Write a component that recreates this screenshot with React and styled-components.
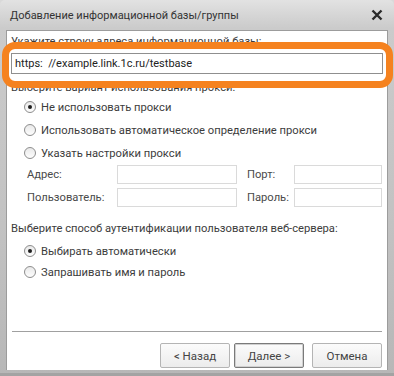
import React, { useState } from "react";
import styled, { createGlobalStyle } from "styled-components";

const GlobalStyle = createGlobalStyle`
  body {
    margin: 0;
    background: #d9d9d9;
    font-family: Roboto, "Liberation Sans", Arial, sans-serif;
  }
`;

const Window = styled.div`
  position: relative;
  width: 394px;
  height: 376px;
  box-sizing: border-box;
  padding: 0 6px 6px 6px;
  display: flex;
  flex-direction: column;
  background: linear-gradient(#e2e2e2, #cbcbcb 28px, #c2c2c2 60%, #b7b7b7);
  border-radius: 5px 5px 0 0;
  box-shadow: inset 0 -3px 0 #a3a3a3;
`;

const TitleBar = styled.div`
  height: 30px;
  display: flex;
  align-items: center;
  justify-content: space-between;
  padding: 0 4px 0 4px;
  font-size: 11px;
  color: #333;
`;

const Close = styled.button`
  border: none;
  background: none;
  padding: 0;
  width: 14px;
  height: 14px;
  display: flex;
  align-items: center;
  justify-content: center;
`;

const Content = styled.div`
  flex: 1;
  background: #fff;
  border: 1px solid #9c9c9c;
  border-bottom: none;
  padding: 3px 4px 2px 4px;
  display: flex;
  flex-direction: column;
  font-size: 11.2px;
  color: #3c3c3c;
`;

const Caption = styled.div`
  height: 16px;
  line-height: 16px;
  margin-top: ${(p) => p.$top || 0}px;
  white-space: nowrap;
`;

const UrlInput = styled.input`
  margin-top: 3px;
  height: 21px;
  box-sizing: border-box;
  border: 1px solid #8f8f8f;
  padding: 0 3px;
  font: 11px Roboto, "Liberation Sans", Arial, sans-serif;
  color: #222;
  outline: none;
`;

const Highlight = styled.div`
  position: absolute;
  left: 2px;
  top: 42px;
  width: 391px;
  height: 46px;
  box-sizing: border-box;
  border: 7px solid #f5821f;
  border-radius: 13px;
  pointer-events: none;
`;

const RadioList = styled.div`
  display: flex;
  flex-direction: column;
  gap: ${(p) => p.$gap}px;
  margin-top: ${(p) => p.$top}px;
  padding-left: 13px;
`;

const RadioRow = styled.label`
  height: 16px;
  display: flex;
  align-items: center;
  gap: 5px;
  white-space: nowrap;
`;

const Circle = styled.span`
  width: 12px;
  height: 12px;
  box-sizing: border-box;
  border-radius: 50%;
  border: 1px solid #8d8d8d;
  background: linear-gradient(#e9e9e9, #fdfdfd);
  display: flex;
  align-items: center;
  justify-content: center;

  &::after {
    content: "";
    width: 4px;
    height: 4px;
    border-radius: 50%;
    background: ${(p) => (p.$on ? "#1e1e1e" : "transparent")};
  }
`;

const ProxyGrid = styled.div`
  margin-top: 4px;
  margin-left: 16px;
  display: grid;
  grid-template-columns: 90px 120px 57px 88px;
  grid-auto-rows: 19px;
  row-gap: 4px;
  align-items: center;
`;

const FieldLabel = styled.span`
  padding-left: ${(p) => p.$pad || 0}px;
  color: #4a4a4a;
`;

const Field = styled.span`
  height: 19px;
  box-sizing: border-box;
  border: 1px solid #dadada;
`;

const Spacer = styled.div`
  flex: 1;
`;

const Separator = styled.div`
  height: 1px;
  background: #a0a0a0;
  margin: 0 1px 0 1px;
`;

const Buttons = styled.div`
  display: flex;
  justify-content: flex-end;
  margin-top: 11px;
  padding-right: 1px;
`;

const Button = styled.button`
  width: 70px;
  height: 25px;
  margin-left: ${(p) => p.$gap}px;
  box-sizing: border-box;
  border: 1px solid ${(p) => (p.$focus ? "#7a7a7a" : "#b4b4b4")};
  box-shadow: ${(p) => (p.$focus ? "inset 0 0 0 1px #d0d0d0" : "none")};
  border-radius: 2px;
  background: linear-gradient(#fbfbfb, #ececec);
  font: 11.5px Roboto, "Liberation Sans", Arial, sans-serif;
  color: #444;
  padding: 0;
`;

function Radio({ checked, onClick, children }) {
  return (
    <RadioRow onClick={onClick}>
      <Circle $on={checked} />
      {children}
    </RadioRow>
  );
}

export default function App() {
  const [proxy, setProxy] = useState(0);
  const [auth, setAuth] = useState(0);
  const [url, setUrl] = useState("https:  //example.link.1c.ru/testbase");

  const proxyOptions = [
    "Не использовать прокси",
    "Использовать автоматическое определение прокси",
    "Указать настройки прокси",
  ];
  const authOptions = ["Выбирать автоматически", "Запрашивать имя и пароль"];

  return (
    <Window>
      <GlobalStyle />
      <TitleBar>
        <span>Добавление информационной базы/группы</span>
        <Close>
          <svg width="12" height="12" viewBox="0 0 12 12">
            <path d="M1.5 1.5 L10.5 10.5 M10.5 1.5 L1.5 10.5" stroke="#2a2a2a" strokeWidth="2.4" />
          </svg>
        </Close>
      </TitleBar>
      <Content>
        <Caption>Укажите строку адреса информационной базы:</Caption>
        <UrlInput value={url} onChange={(e) => setUrl(e.target.value)} />
        <Caption $top={6}>Выберите вариант использования прокси:</Caption>
        <RadioList $gap={7} $top={3}>
          {proxyOptions.map((text, i) => (
            <Radio key={text} checked={proxy === i} onClick={() => setProxy(i)}>
              {text}
            </Radio>
          ))}
        </RadioList>
        <ProxyGrid>
          <FieldLabel>Адрес:</FieldLabel>
          <Field />
          <FieldLabel $pad={10}>Порт:</FieldLabel>
          <Field />
          <FieldLabel>Пользователь:</FieldLabel>
          <Field />
          <FieldLabel $pad={10}>Пароль:</FieldLabel>
          <Field />
        </ProxyGrid>
        <Caption $top={14}>Выберите способ аутентификации пользователя веб-сервера:</Caption>
        <RadioList $gap={5} $top={6}>
          {authOptions.map((text, i) => (
            <Radio key={text} checked={auth === i} onClick={() => setAuth(i)}>
              {text}
            </Radio>
          ))}
        </RadioList>
        <Spacer />
        <Separator />
        <Buttons>
          <Button $gap={0}>&lt; Назад</Button>
          <Button $gap={4} $focus>Далее &gt;</Button>
          <Button $gap={8}>Отмена</Button>
        </Buttons>
      </Content>
      <Highlight />
    </Window>
  );
}
